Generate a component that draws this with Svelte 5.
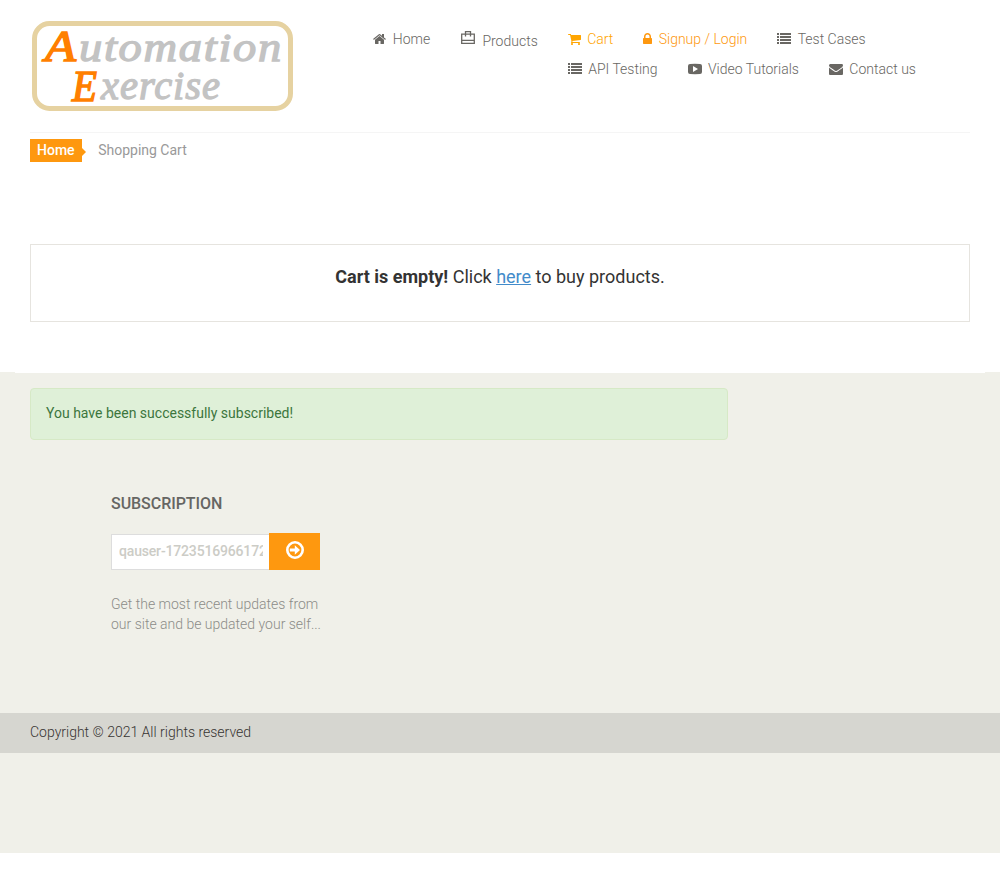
<script>
  const icons = {
    home: { x: 64, w: 13, d: 'M1472 992v480q0 26-19 45t-45 19h-384v-384h-256v384h-384q-26 0-45-19t-19-45v-480q0-1 .5-3t.5-3l575-474 575 474q1 2 1 6zm223-69l-62 74q-8 9-21 11h-3q-13 0-21-7l-692-577-692 577q-12 8-24 7-13-2-21-11l-62-74q-8-10-7-23.5t11-21.5l719-599q32-26 76-26t76 26l244 204v-195q0-14 9-23t23-9h192q14 0 23 9t9 23v408l219 182q10 8 11 21.5t-7 23.5z' },
    cart: { x: 64, w: 13, d: 'M704 1536q0 52-38 90t-90 38-90-38-38-90 38-90 90-38 90 38 38 90zm896 0q0 52-38 90t-90 38-90-38-38-90 38-90 90-38 90 38 38 90zm128-1088v512q0 24-16.5 42.5t-40.5 21.5l-1044 122q13 60 13 70 0 16-24 64h920q26 0 45 19t19 45-19 45-45 19h-1024q-26 0-45-19t-19-45q0-11 8-31.5t16-36 21.5-40 15.5-29.5l-177-823h-204q-26 0-45-19t-19-45 19-45 45-19h256q16 0 28.5 6.5t19.5 15.5 13 24.5 8 26 5.5 29.5 4.5 26h1201q26 0 45 19t19 45z' },
    lock: { x: 320, w: 9, d: 'M640 768h512v-192q0-106-75-181t-181-75-181 75-75 181v192zm832 96v576q0 40-28 68t-68 28h-960q-40 0-68-28t-28-68v-576q0-40 28-68t68-28h32v-192q0-184 132-316t316-132 316 132 132 316v192h32q40 0 68 28t28 68z' },
    list: { x: 0, w: 14, d: 'M0 128h256v256H0zM384 128h1408v256H384zM0 512h256v256H0zM384 512h1408v256H384zM0 896h256v256H0zM384 896h1408v256H384zM0 1280h256v256H0zM384 1280h1408v256H384z' },
    video: { x: 0, w: 14, d: 'M256 256Q896 220 1536 256Q1792 270 1792 500V1292Q1792 1522 1536 1536Q896 1572 256 1536Q0 1522 0 1292V500Q0 270 256 256ZM640 512V1280L1280 896Z' },
    mail: { x: 0, w: 14, d: 'M1792 710v794q0 66-47 113t-113 47h-1472q-66 0-113-47t-47-113v-794q44 49 101 87 362 246 497 345 57 42 92.5 65.5t94.5 48 110 24.5h2q51 0 110-24.5t94.5-48 92.5-65.5q170-123 498-345 57-39 100-87zm0-294q0 79-49 151t-122 123q-376 261-468 325-10 7-42.5 31t-54 38.5-52 32.5-57.5 27-50 9h-2q-23 0-50-9t-57.5-27-52-32.5-54-38.5-42.5-31q-91-64-262-182.5t-205-142.5q-62-42-117-115.5t-55-136.5q0-78 41.5-130t118.5-52h1472q65 0 112.5 47t47.5 113z' }
  };
  const rows = [
    [
      { label: 'Home', icon: 'home' },
      { label: 'Products', icon: 'bag' },
      { label: 'Cart', icon: 'cart', tone: 'active' },
      { label: 'Signup / Login', icon: 'lock', tone: 'accent' },
      { label: 'Test Cases', icon: 'list' }
    ],
    [
      { label: 'API Testing', icon: 'list' },
      { label: 'Video Tutorials', icon: 'video' },
      { label: 'Contact us', icon: 'mail' }
    ]
  ];
  let email = $state('qauser-1723516966172@example.com');
</script>

<header>
  <svg class="logo" width="264" height="92" viewBox="31 20 264 92" role="img" aria-label="Automation Exercise">
    <rect x="34.5" y="23.5" width="256" height="85" rx="15" fill="#fff" stroke="#e6d2a1" stroke-width="5" />
    <g font-family="'Liberation Serif', serif" font-style="italic" stroke-width="1.3">
      <text x="45" y="61" font-size="45" fill="#ff7f00" stroke="#ff7f00" stroke-width="1.5" textLength="31" lengthAdjust="spacingAndGlyphs">A</text>
      <text x="79" y="61" font-size="41" fill="#c3c3c3" stroke="#c3c3c3" letter-spacing="1.5" textLength="204" lengthAdjust="spacingAndGlyphs">utomation</text>
      <text x="72" y="101" font-size="45" fill="#ff7f00" stroke="#ff7f00" stroke-width="1.5" textLength="25" lengthAdjust="spacingAndGlyphs">E</text>
      <text x="101" y="99" font-size="41" fill="#c3c3c3" stroke="#c3c3c3" letter-spacing="1" textLength="120" lengthAdjust="spacingAndGlyphs">xercise</text>
    </g>
  </svg>
  <nav>
    {#each rows as row, i}
      <ul class:second={i === 1}>
        {#each row as item}
          <li class={item.tone ?? ''} class:low={item.icon === 'bag'}>
            {#if item.icon === 'bag'}
              <svg class="bag" width="15" height="15" viewBox="0 0 15 15" fill="none" stroke="currentColor" stroke-width="1.3">
                <path d="M.7 4.2h12.6v9.1H.7zM.7 10.4h12.6M4.5 6.5V1.6h5v4.9" />
              </svg>
            {:else}
              <svg width={icons[item.icon].w} height="14" viewBox="{icons[item.icon].x} 0 {icons[item.icon].w * 128} 1792" fill="currentColor" fill-rule="evenodd">
                <path d={icons[item.icon].d} />
              </svg>
            {/if}
            <span>{item.label}</span>
          </li>
        {/each}
      </ul>
    {/each}
  </nav>
</header>

<main>
  <div class="crumbs"><b>Home</b><span>Shopping Cart</span></div>
  <p class="empty"><b>Cart is empty!</b> Click <a href="#products">here</a> to buy products.</p>
</main>

<footer>
  <div class="edge"></div>
  <div class="alert">You have been successfully subscribed!</div>
  <section>
    <h2>Subscription</h2>
    <form>
      <input type="text" aria-label="Email" bind:value={email} />
      <button type="button" aria-label="Subscribe">
        <svg width="18" height="18" viewBox="0 0 18 18">
          <circle cx="9" cy="9" r="7.7" fill="none" stroke="#fff" stroke-width="2.6" />
          <path d="M3.8 7.5h5V4.2L14 9l-5.2 4.8v-3.3h-5z" fill="#fff" />
        </svg>
      </button>
    </form>
    <p>Get the most recent updates from<br />our site and be updated your self...</p>
  </section>
  <div class="copyright">Copyright © 2021 All rights reserved</div>
</footer>

<style>
  :global(body) { margin: 0; background: #fff; }
  :global(#app) { font: 400 14px/20px Roboto, sans-serif; }
  header { display: flex; box-sizing: border-box; height: 133px; margin: 0 30px; padding-top: 20px; border-bottom: 1px solid #f5f5f5; }
  .logo { flex: none; margin-left: 1px; }
  nav { padding: 9px 0 0 78.4px; }
  ul { display: flex; gap: 30px; margin: 0 0 10px; padding: 0; list-style: none; height: 20px; }
  ul.second { padding-left: 194.4px; }
  li { display: flex; align-items: center; gap: 6.4px; color: #696763; font-weight: 300; white-space: nowrap; }
  li.active { color: orange; }
  li.accent { color: #fe980f; }
  li.low { margin-left: 0.8px; }
  li.low span { padding-top: 4px; }
  .bag { margin-bottom: 4px; }
  .crumbs { display: flex; align-items: flex-start; padding: 6px 30px 0; }
  .crumbs b { position: relative; padding: 1px 7px 2px; line-height: 20px; font-weight: 500; color: #fff; background: #fe980f; }
  .crumbs b::after { content: ''; position: absolute; left: 100%; top: 9px; border: 4px solid transparent; border-left-color: #fe980f; border-right: 0; }
  .crumbs span { margin-left: 16.6px; padding-top: 1px; color: #999; }
  .empty { box-sizing: border-box; height: 78px; margin: 82px 30px 50px; padding-top: 19px; border: 1px solid #e6e4df; text-align: center; font-size: 18px; line-height: 26px; color: #333; }
  .empty b { font-weight: 700; }
  .empty a { color: #428bca; text-decoration: underline; }
  footer { height: 481px; background: #f0f0e9; }
  .edge { height: 1px; margin: 0 15px; background: #fff; }
  .alert { box-sizing: border-box; width: 698px; height: 52px; margin: 15px 0 0 30px; padding: 14px 15px; border: 1px solid #d6e9c6; border-radius: 4px; background: #dff0d8; color: #3c763d; }
  section { height: 273px; padding-left: 111px; }
  h2 { margin: 0; padding-top: 54px; font-size: 16px; line-height: 20px; font-weight: 500; letter-spacing: -0.05px; text-transform: uppercase; color: #666663; }
  form { display: flex; align-items: flex-end; margin-top: 19px; height: 37px; }
  input { box-sizing: border-box; width: 159px; height: 36px; padding: 0 6px 2px 7px; border: 1px solid #ddd; border-radius: 0; outline: 0; background: #fff; font: 500 14px Roboto, sans-serif; letter-spacing: -0.17px; color: #ccccc6; }
  button { display: flex; justify-content: center; width: 51px; height: 37px; margin-left: -1px; padding: 8px 0 0; border: 0; background: #fe980f; }
  section p { margin: 24px 0 0; font-weight: 300; color: #8c8c88; }
  .copyright { height: 30px; padding: 9px 30px 1px; background: #d6d6d0; font-weight: 300; color: #363432; }
</style>
